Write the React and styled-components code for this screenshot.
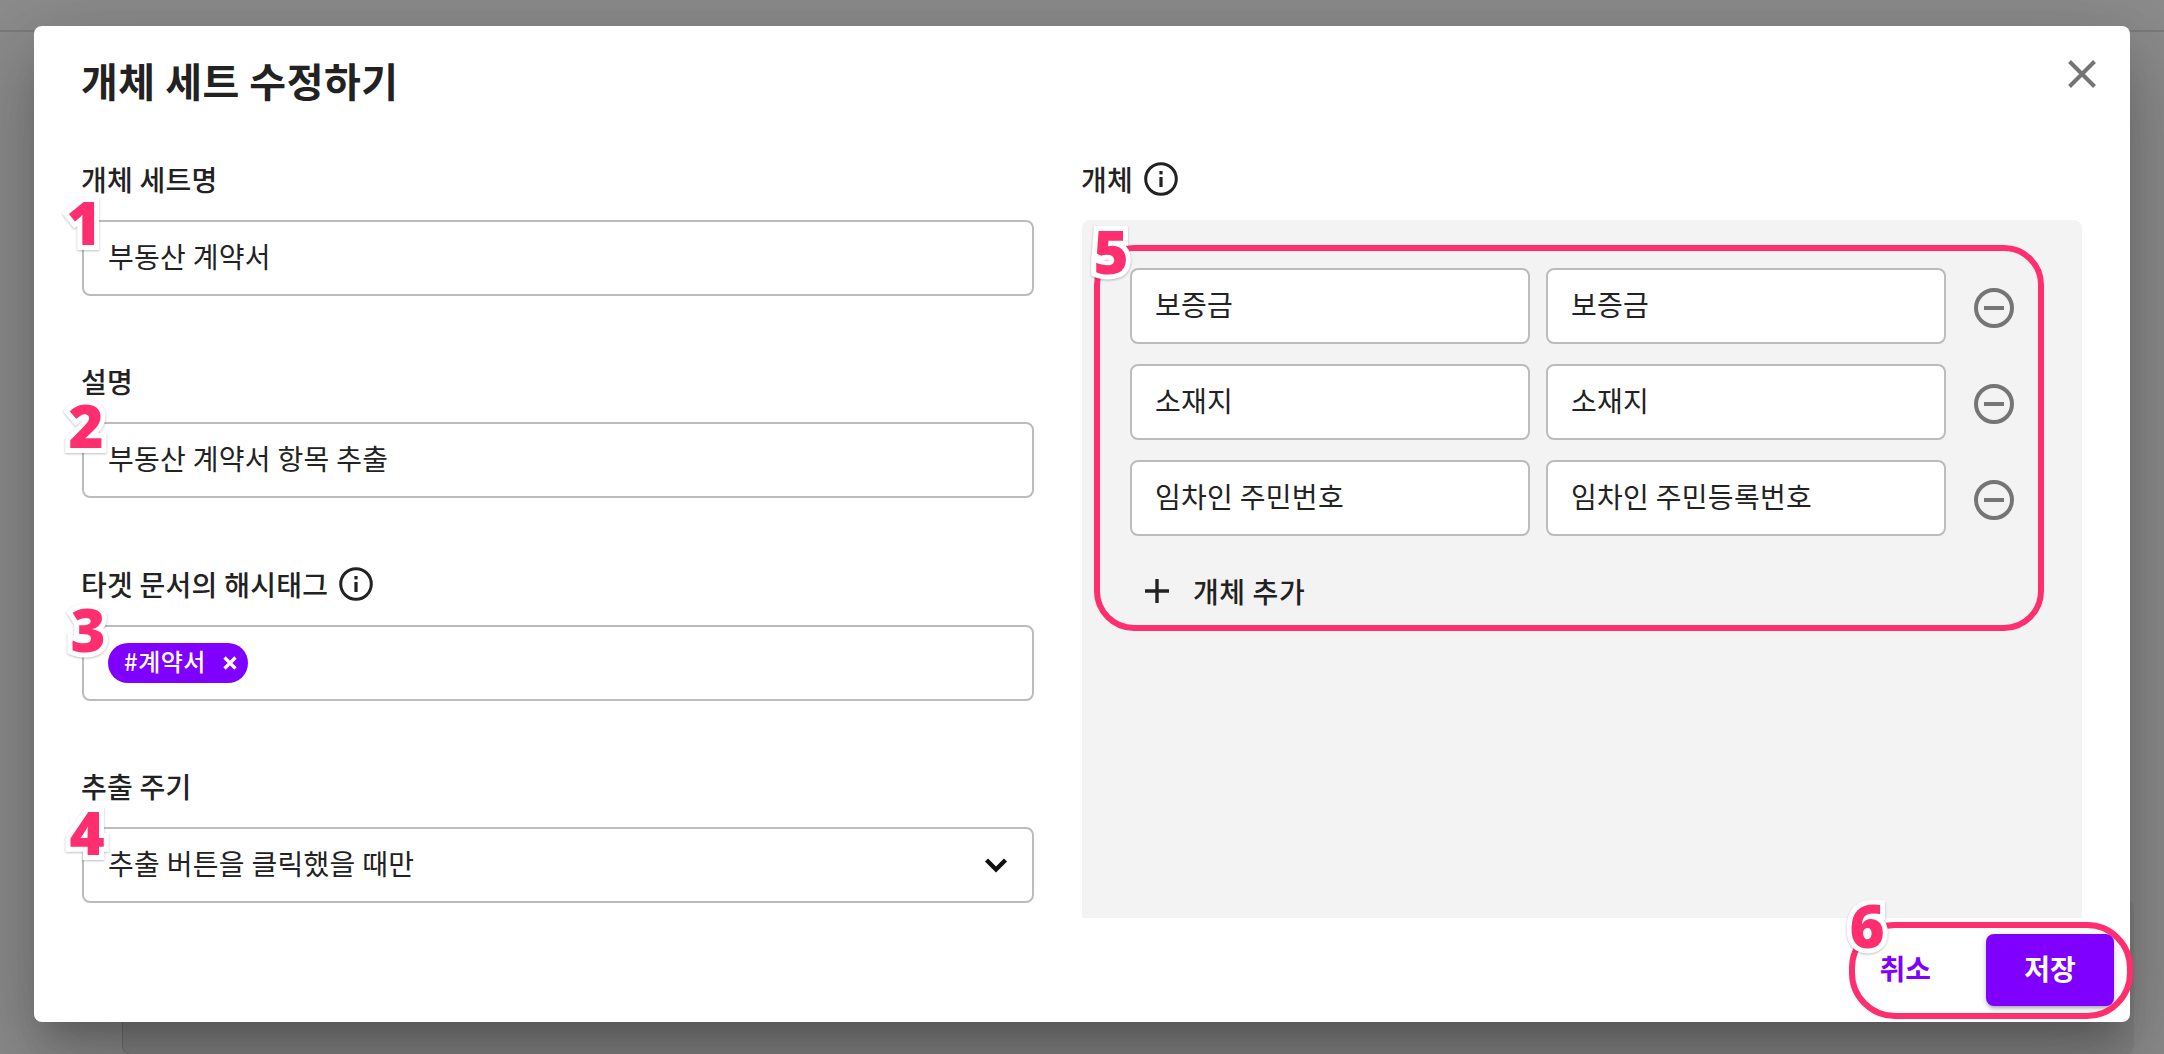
import React from "react";
import styled, { createGlobalStyle } from "styled-components";

const Global = createGlobalStyle`
  html, body { margin: 0; padding: 0; height: 100%; }
  body { font-family: "Noto Sans CJK KR", "Noto Sans", sans-serif; background: #8c8c8c; overflow: hidden; }
  * { box-sizing: border-box; }
`;

const Page = styled.div`
  position: relative;
  width: 2164px;
  height: 1054px;
  padding: 26px 34px 32px;
  background: #8c8c8c;
  overflow: hidden;
`;
const TopRule = styled.div`
  position: absolute;
  top: 30px;
  left: 0;
  right: 0;
  height: 2px;
  background: #7b7b7b;
`;
const BackCard = styled.div`
  position: absolute;
  left: 123px;
  right: 30px;
  top: 900px;
  height: 154px;
  border-radius: 8px;
  background: #848484;
  box-shadow: -1px 0 0 #707070;
`;
const Modal = styled.section`
  position: relative;
  width: 2096px;
  height: 996px;
  background: #fff;
  border-radius: 8px;
  display: flex;
  flex-direction: column;
  box-shadow: 0 22px 30px -14px rgba(0,0,0,.2), 0 48px 76px 6px rgba(0,0,0,.14), 0 18px 92px 16px rgba(0,0,0,.12);
`;
const Header = styled.header`
  height: 133px;
  padding: 26px 47px 0;
`;
const Title = styled.h1`
  margin: 0;
  font-size: 40px;
  line-height: 56px;
  font-weight: 700;
  letter-spacing: .5px;
  color: #222;
`;
const Close = styled.button`
  position: absolute;
  top: 34px;
  right: 34px;
  width: 28px;
  height: 28px;
  padding: 0;
  border: 0;
  background: none;
  display: block;
`;
const Body = styled.div`
  display: grid;
  grid-template-columns: 952px 1000px;
  column-gap: 48px;
  padding: 0 48px;
  height: 759px;
  flex: none;
`;
const LeftColumn = styled.div`
  display: flex;
  flex-direction: column;
  gap: 65.4px;
`;
const RightColumn = styled.div`
  display: flex;
  flex-direction: column;
`;
const Field = styled.div`
  display: flex;
  flex-direction: column;
  gap: 21px;
`;
const Label = styled.label`
  display: flex;
  align-items: center;
  gap: 11px;
  height: 40px;
  margin-left: -1px;
  font-size: 28px;
  font-weight: 500;
  letter-spacing: .25px;
  color: #222;
`;
const InputBox = styled.div`
  display: flex;
  align-items: center;
  justify-content: space-between;
  height: 76px;
  padding: 0 ${p => p.$pr || 24}px 4px ${p => p.$pl || 24}px;
  background: #fff;
  border: 2px solid #bcbcbc;
  border-radius: 8px;
  font-size: 28px;
  font-weight: 400;
  letter-spacing: .3px;
  color: #222;
`;
const Tag = styled.span`
  display: inline-flex;
  align-items: center;
  height: 40px;
  width: 140px;
  margin-top: 4px;
  padding: 0 10px 4px 16px;
  justify-content: space-between;
  border-radius: 20px;
  background: #8000ff;
  color: #fff;
  font-size: 24px;
  font-weight: 500;
  letter-spacing: .5px;
`;
const TagClose = styled.svg`
  margin-top: 5px;
`;
const SelectChevron = styled.svg`
  margin: 4px -2px 0 0;
`;
const Panel = styled.div`
  margin-top: 21px;
  flex: 1;
  background: #f3f3f3;
  border-radius: 8px 8px 0 0;
  padding: 48px 48px 0;
  display: flex;
  flex-direction: column;
  gap: 20px;
`;
const Row = styled.div`
  display: grid;
  grid-template-columns: 400px 400px 40px;
  column-gap: 16px;
  align-items: center;
`;
const Remove = styled.button`
  width: 40px;
  height: 40px;
  margin: 4px 0 0 12px;
  padding: 0;
  border: 0;
  background: none;
  display: block;
`;
const AddButton = styled.div`
  display: flex;
  align-items: center;
  gap: 24px;
  margin-top: 15px;
  padding-left: 15px;
  height: 40px;
  font-size: 28px;
  font-weight: 500;
  letter-spacing: .6px;
  color: #222;
`;
const Footer = styled.footer`
  flex: 1;
  display: flex;
  align-items: flex-start;
  justify-content: flex-end;
  gap: 55px;
  padding: 16px 16px 0 0;
`;
const CancelButton = styled.button`
  height: 72px;
  padding: 0 0 4px;
  border: 0;
  background: none;
  color: #8000ff;
  font: 700 28px "Noto Sans CJK KR", sans-serif;
`;
const SaveButton = styled.button`
  width: 128px;
  height: 72px;
  padding: 0 0 4px;
  border: 0;
  border-radius: 8px;
  background: #8000ff;
  color: #fff;
  font: 700 28px "Noto Sans CJK KR", sans-serif;
  box-shadow: 0 3px 3px -2px rgba(0,0,0,.2), 0 3px 4px rgba(0,0,0,.14), 0 1px 8px rgba(0,0,0,.12);
`;
const Callout = styled.div`
  position: absolute;
  left: ${p => p.$x}px;
  top: ${p => p.$y}px;
  width: ${p => p.$w}px;
  height: ${p => p.$h}px;
  border: 6px solid #ff2e6e;
  border-radius: ${p => p.$r}px;
  pointer-events: none;
`;
const Marker = styled.span`
  position: absolute;
  left: ${p => p.$x}px;
  top: ${p => p.$y}px;
  transform: translate(-50%, -50%);
  font-family: "Open Sans", sans-serif;
  font-size: 60px;
  line-height: 1;
  font-weight: 800;
  color: #ff2e6e;
  -webkit-text-stroke: 10px #fff;
  paint-order: stroke fill;
  filter: drop-shadow(0 1px 1px rgba(0,0,0,.25));
`;

const InfoIcon = () => (
  <svg width="34" height="34" viewBox="0 0 34 34" fill="none">
    <circle cx="17" cy="17" r="15.3" stroke="#222" strokeWidth="3" />
    <rect x="15.4" y="15" width="3.2" height="10" fill="#222" />
    <rect x="15.4" y="9" width="3.2" height="3.4" fill="#222" />
  </svg>
);
const MinusIcon = () => (
  <svg width="40" height="40" viewBox="0 0 40 40" fill="none">
    <circle cx="20" cy="20" r="18" stroke="#757575" strokeWidth="4" />
    <rect x="10" y="18" width="20" height="4" fill="#757575" />
  </svg>
);
const CloseIcon = () => (
  <svg width="28" height="28" viewBox="0 0 28 28" fill="none">
    <path d="M1.5 1.5 26.5 26.5M26.5 1.5 1.5 26.5" stroke="#757575" strokeWidth="4" />
  </svg>
);
const PlusIcon = () => (
  <svg width="24" height="24" viewBox="0 0 24 24" fill="none">
    <path d="M0 12H24M12 0V24" stroke="#222" strokeWidth="3.4" />
  </svg>
);
const Chevron = () => (
  <SelectChevron width="24" height="16" viewBox="0 0 24 16" fill="none">
    <path d="M2.5 3 12 12.5 21.5 3" stroke="#111" strokeWidth="4.4" />
  </SelectChevron>
);
const TagX = () => (
  <TagClose width="16" height="16" viewBox="0 0 16 16" fill="none">
    <path d="M2.5 2.5 13.5 13.5M13.5 2.5 2.5 13.5" stroke="#fff" strokeWidth="3.2" />
  </TagClose>
);

const rows = [
  ["보증금", "보증금"],
  ["소재지", "소재지"],
  ["임차인 주민번호", "임차인 주민등록번호"],
];

const markers = [
  ["1", 50, 196], ["2", 52, 399], ["3", 54, 603], ["4", 53, 806], ["5", 1077, 225], ["6", 1833, 899],
];

export default function App() {
  return (
    <Page>
      <Global />
      <TopRule />
      <BackCard />
      <Modal>
        <Header>
          <Title>개체 세트 수정하기</Title>
        </Header>
        <Close aria-label="닫기"><CloseIcon /></Close>
        <Body>
          <LeftColumn>
            <Field>
              <Label>개체 세트명</Label>
              <InputBox>부동산 계약서</InputBox>
            </Field>
            <Field>
              <Label>설명</Label>
              <InputBox>부동산 계약서 항목 추출</InputBox>
            </Field>
            <Field>
              <Label>타겟 문서의 해시태그 <InfoIcon /></Label>
              <InputBox><Tag>#계약서 <TagX /></Tag></InputBox>
            </Field>
            <Field>
              <Label>추출 주기</Label>
              <InputBox $pr={26}>추출 버튼을 클릭했을 때만 <Chevron /></InputBox>
            </Field>
          </LeftColumn>
          <RightColumn>
            <Label>개체 <InfoIcon /></Label>
            <Panel>
              {rows.map(([a, b]) => (
                <Row key={a}>
                  <InputBox $pl={23}>{a}</InputBox>
                  <InputBox $pl={23}>{b}</InputBox>
                  <Remove aria-label="삭제"><MinusIcon /></Remove>
                </Row>
              ))}
              <AddButton><PlusIcon /> 개체 추가</AddButton>
            </Panel>
          </RightColumn>
        </Body>
        <Footer>
          <CancelButton>취소</CancelButton>
          <SaveButton>저장</SaveButton>
        </Footer>
        <Callout $x={1060} $y={219} $w={950} $h={386} $r={40} />
        <Callout $x={1815} $y={896} $w={284} $h={97} $r={46} />
        {markers.map(([n, x, y]) => <Marker key={n} $x={x} $y={y}>{n}</Marker>)}
      </Modal>
    </Page>
  );
}
